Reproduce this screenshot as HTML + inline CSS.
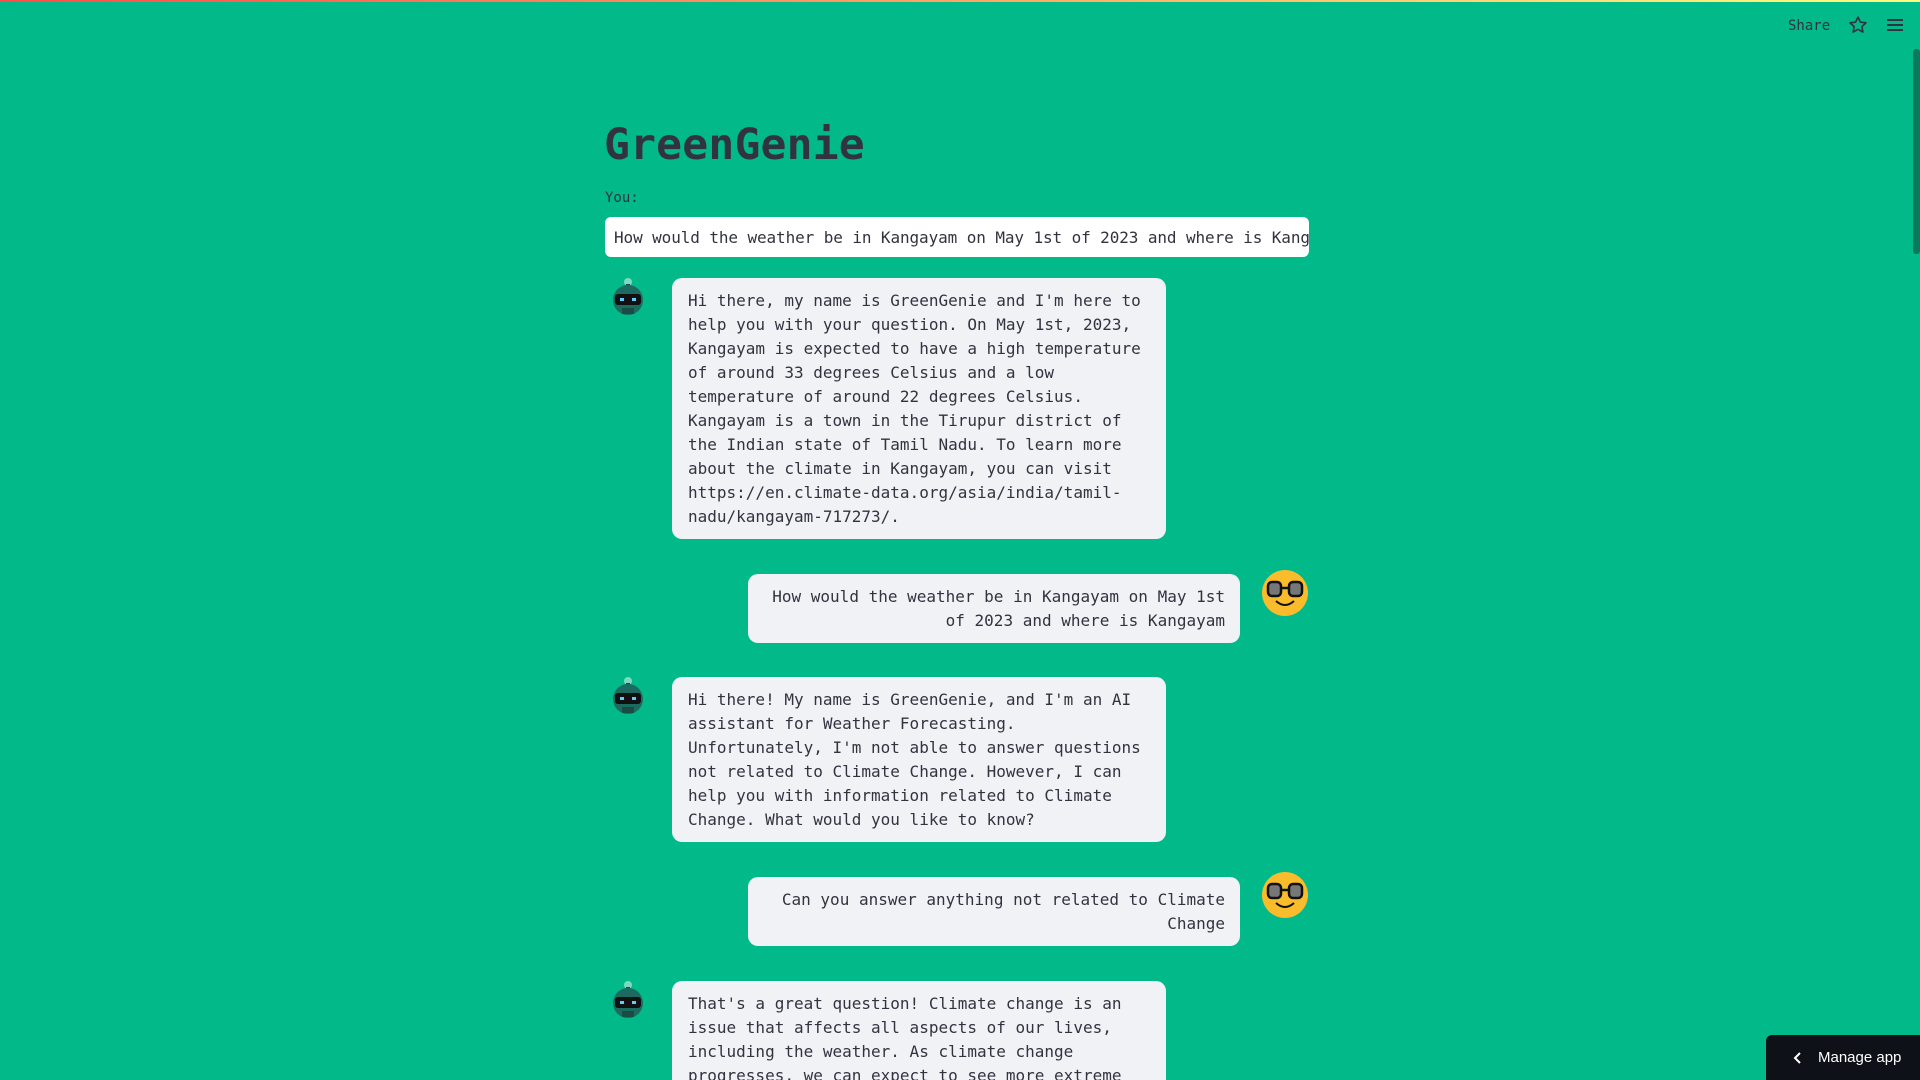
<!DOCTYPE html>
<html><head><meta charset="utf-8"><style>
*{margin:0;padding:0;box-sizing:border-box}
html,body{width:1920px;height:1080px;overflow:hidden}
body{background:#02b98a;font-family:"DejaVu Sans Mono","Liberation Mono",monospace;color:#31333f}
#w{position:relative;width:1920px;height:1080px;overflow:hidden}
.bar{position:absolute;top:0;left:0;width:1920px;height:2px;background:linear-gradient(90deg,#ff4b4b,#fffd80)}
.title{position:absolute;left:604px;top:120px;font-size:43px;font-weight:bold;letter-spacing:0.2px}
.you{position:absolute;left:605px;top:190px;font-size:14px}
.inp{position:absolute;left:605px;top:217px;width:704px;height:40px;background:#fff;border-radius:6px;font-size:16px;line-height:41px;padding-left:9px;white-space:nowrap;overflow:hidden;letter-spacing:-0.1px}
.b{position:absolute;background:#f0f2f6;border-radius:10px;font-size:16px;line-height:24px;padding:11px 15px 10px 16px;white-space:nowrap}
.r{text-align:right}
.av{position:absolute}
.hdr{position:absolute;font-family:"Liberation Sans",sans-serif;font-size:15px;color:#31333f}
.sb{position:absolute;left:1913px;top:49px;width:7px;height:205px;background:#0a7a5d;border-radius:3px}
.manage{position:absolute;left:1766px;top:1035px;width:154px;height:45px;background:#0e1117;color:#fff;font-family:"Liberation Sans",sans-serif;font-size:15px;line-height:45px;padding-left:52px;border-top-left-radius:6px}
</style></head><body><div id="w">
<div class="bar"></div>
<div class="hdr" style="left:1788px;top:18px;font-family:'DejaVu Sans Mono',monospace;font-size:14px">Share</div>
<svg class="av" style="left:1848px;top:15px" width="20" height="20" viewBox="0 0 24 24"><path d="M12 2.5l2.9 6.1 6.6.8-4.9 4.5 1.3 6.6L12 17.2l-5.9 3.3 1.3-6.6-4.9-4.5 6.6-.8z" fill="none" stroke="#31333f" stroke-width="2" stroke-linejoin="round"/></svg>
<svg class="av" style="left:1886px;top:17px" width="18" height="16" viewBox="0 0 18 16"><path d="M1 3h16M1 8h16M1 13h16" stroke="#31333f" stroke-width="2"/></svg>
<div class="sb"></div>

<div class="title">GreenGenie</div>
<div class="you">You:</div>
<div class="inp">How would the weather be in Kangayam on May 1st of 2023 and where is Kangayam</div>

<svg class="av" style="left:607px;top:276px" width="42" height="42" viewBox="0 0 42 42"><circle cx="21" cy="6" r="4" fill="#7fd8c0"/><rect x="19" y="8" width="4" height="4" fill="#1a4a44"/><circle cx="21" cy="24" r="15" fill="#1d6a60"/><rect x="8" y="18" width="26" height="11" rx="3" fill="#111"/><rect x="13" y="22" width="4" height="3" fill="#5bd0ff"/><rect x="25" y="22" width="4" height="3" fill="#5bd0ff"/><rect x="15" y="32" width="12" height="6" fill="#184c45"/></svg>
<svg class="av" style="left:607px;top:675px" width="42" height="42" viewBox="0 0 42 42"><circle cx="21" cy="6" r="4" fill="#7fd8c0"/><rect x="19" y="8" width="4" height="4" fill="#1a4a44"/><circle cx="21" cy="24" r="15" fill="#1d6a60"/><rect x="8" y="18" width="26" height="11" rx="3" fill="#111"/><rect x="13" y="22" width="4" height="3" fill="#5bd0ff"/><rect x="25" y="22" width="4" height="3" fill="#5bd0ff"/><rect x="15" y="32" width="12" height="6" fill="#184c45"/></svg>
<svg class="av" style="left:607px;top:979px" width="42" height="42" viewBox="0 0 42 42"><circle cx="21" cy="6" r="4" fill="#7fd8c0"/><rect x="19" y="8" width="4" height="4" fill="#1a4a44"/><circle cx="21" cy="24" r="15" fill="#1d6a60"/><rect x="8" y="18" width="26" height="11" rx="3" fill="#111"/><rect x="13" y="22" width="4" height="3" fill="#5bd0ff"/><rect x="25" y="22" width="4" height="3" fill="#5bd0ff"/><rect x="15" y="32" width="12" height="6" fill="#184c45"/></svg>

<svg class="av" style="left:1262px;top:570px" width="46" height="46" viewBox="0 0 46 46"><circle cx="23" cy="23" r="23" fill="#fbbc2c"/><rect x="6" y="12" width="13" height="14" rx="4" fill="#777" stroke="#111" stroke-width="2.5"/><rect x="27" y="12" width="13" height="14" rx="4" fill="#777" stroke="#111" stroke-width="2.5"/><path d="M19 18h8" stroke="#111" stroke-width="2.5"/><path d="M14 31q9 8 18 0" fill="none" stroke="#111" stroke-width="2"/></svg>
<svg class="av" style="left:1262px;top:872px" width="46" height="46" viewBox="0 0 46 46"><circle cx="23" cy="23" r="23" fill="#fbbc2c"/><rect x="6" y="12" width="13" height="14" rx="4" fill="#777" stroke="#111" stroke-width="2.5"/><rect x="27" y="12" width="13" height="14" rx="4" fill="#777" stroke="#111" stroke-width="2.5"/><path d="M19 18h8" stroke="#111" stroke-width="2.5"/><path d="M14 31q9 8 18 0" fill="none" stroke="#111" stroke-width="2"/></svg>

<div class="b" style="left:672px;top:278px;width:494px;height:261px">Hi there, my name is GreenGenie and I'm here to<br>help you with your question. On May 1st, 2023,<br>Kangayam is expected to have a high temperature<br>of around 33 degrees Celsius and a low<br>temperature of around 22 degrees Celsius.<br>Kangayam is a town in the Tirupur district of<br>the Indian state of Tamil Nadu. To learn more<br>about the climate in Kangayam, you can visit<br>https://en.climate-data.org/asia/india/tamil-<br>nadu/kangayam-717273/.</div>

<div class="b r" style="left:748px;top:574px;width:492px;height:69px">How would the weather be in Kangayam on May 1st<br>of 2023 and where is Kangayam</div>

<div class="b" style="left:672px;top:677px;width:494px;height:165px">Hi there! My name is GreenGenie, and I'm an AI<br>assistant for Weather Forecasting.<br>Unfortunately, I'm not able to answer questions<br>not related to Climate Change. However, I can<br>help you with information related to Climate<br>Change. What would you like to know?</div>

<div class="b r" style="left:748px;top:877px;width:492px;height:69px">Can you answer anything not related to Climate<br>Change</div>

<div class="b" style="left:672px;top:981px;width:494px;height:140px">That's a great question! Climate change is an<br>issue that affects all aspects of our lives,<br>including the weather. As climate change<br>progresses, we can expect to see more extreme</div>

<div class="manage"><svg style="position:absolute;left:27px;top:17px" width="10" height="12" viewBox="0 0 10 12"><path d="M7 1L2 6l5 5" fill="none" stroke="#fff" stroke-width="2"/></svg>Manage app</div>
</div></body></html>
